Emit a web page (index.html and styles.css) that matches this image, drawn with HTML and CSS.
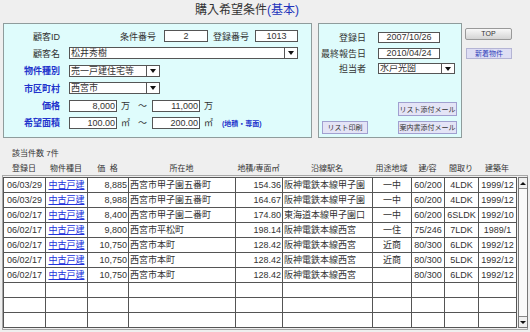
FILE: index.html
```html
<!DOCTYPE html>
<html lang="ja">
<head>
  <meta charset="UTF-8">
  <title>購入希望条件</title>
  <link rel="stylesheet" href="styles.css">
</head>
<body>
  <h1 class="title">購入希望条件<span class="title-sub">(基本)</span></h1>

  <div class="top">
    <div class="panel panel-main">
      <div class="row">
        <span class="lbl">顧客ID</span>
        <span class="lbl lbl-no1">条件番号</span>
        <span class="box box-no1">2</span>
        <span class="lbl lbl-no2">登録番号</span>
        <span class="box box-no2">1013</span>
      </div>
      <div class="row">
        <span class="lbl">顧客名</span>
        <span class="box select select-name"><span class="select-text">松井秀樹</span><span class="arrow"></span></span>
      </div>
      <div class="row">
        <span class="lbl lbl-key">物件種別</span>
        <span class="box select select-short"><span class="select-text">売一戸建住宅等</span><span class="arrow"></span></span>
      </div>
      <div class="row">
        <span class="lbl lbl-key">市区町村</span>
        <span class="box select select-short"><span class="select-text">西宮市</span><span class="arrow"></span></span>
      </div>
      <div class="row">
        <span class="lbl lbl-key">価格</span>
        <span class="box box-range">8,000</span>
        <span class="unit">万</span>
        <span class="tilde">～</span>
        <span class="box box-range">11,000</span>
        <span class="unit">万</span>
      </div>
      <div class="row">
        <span class="lbl lbl-key">希望面積</span>
        <span class="box box-range">100.00</span>
        <span class="unit">㎡</span>
        <span class="tilde">～</span>
        <span class="box box-range">200.00</span>
        <span class="unit">㎡</span>
        <span class="note">(地積・専面)</span>
      </div>
    </div>

    <div class="panel panel-side">
      <div class="side-row">
        <span class="side-lbl">登録日</span>
        <span class="box box-date">2007/10/26</span>
      </div>
      <div class="side-row">
        <span class="side-lbl">最終報告日</span>
        <span class="box box-date">2010/04/24</span>
      </div>
      <div class="side-row">
        <span class="side-lbl">担当者</span>
        <span class="box select select-staff"><span class="select-text">水戸光圀</span><span class="arrow"></span></span>
      </div>
      <div class="side-actions">
        <div class="btn-row">
          <button class="btn btn-mail">リスト添付メール</button>
        </div>
        <div class="btn-row">
          <button class="btn btn-print">リスト印刷</button>
          <button class="btn btn-guide">案内書添付メール</button>
        </div>
      </div>
    </div>

    <div class="nav">
      <button class="btn-top">TOP</button>
      <button class="btn-new">新着物件</button>
    </div>
  </div>

  <div class="count">該当件数 7件</div>

  <table class="head">
    <colgroup>
      <col style="width:42px"><col style="width:42px"><col style="width:41px"><col style="width:107px"><col style="width:47px">
      <col style="width:90px"><col style="width:39px"><col style="width:33px"><col style="width:34px"><col style="width:38px">
    </colgroup>
    <tr>
      <th>登録日</th><th>物件種目</th><th>価&nbsp;&nbsp;格</th><th>所在地</th><th>地積/専面㎡</th>
      <th>沿線駅名</th><th>用途地域</th><th>建/容</th><th>間取り</th><th>建築年</th>
    </tr>
  </table>

  <div class="list">
    <table class="grid">
      <colgroup>
        <col style="width:42px"><col style="width:42px"><col style="width:41px"><col style="width:107px"><col style="width:47px">
        <col style="width:90px"><col style="width:39px"><col style="width:33px"><col style="width:34px"><col style="width:38px">
      </colgroup>
      <tr><td class="c">06/03/29</td><td class="c"><a href="#">中古戸建</a></td><td class="r">8,885</td><td>西宮市甲子園五番町</td><td class="r">154.36</td><td>阪神電鉄本線甲子園</td><td class="c">一中</td><td class="c">60/200</td><td class="c">4LDK</td><td class="c">1999/12</td></tr>
      <tr><td class="c">06/03/29</td><td class="c"><a href="#">中古戸建</a></td><td class="r">8,988</td><td>西宮市甲子園五番町</td><td class="r">164.67</td><td>阪神電鉄本線甲子園</td><td class="c">一中</td><td class="c">60/200</td><td class="c">4LDK</td><td class="c">1999/12</td></tr>
      <tr><td class="c">06/02/17</td><td class="c"><a href="#">中古戸建</a></td><td class="r">8,400</td><td>西宮市甲子園二番町</td><td class="r">174.80</td><td>東海道本線甲子園口</td><td class="c">一中</td><td class="c">60/200</td><td class="c">6SLDK</td><td class="c">1992/10</td></tr>
      <tr><td class="c">06/02/17</td><td class="c"><a href="#">中古戸建</a></td><td class="r">9,800</td><td>西宮市平松町</td><td class="r">198.14</td><td>阪神電鉄本線西宮</td><td class="c">一住</td><td class="c">75/246</td><td class="c">7LDK</td><td class="c">1989/1</td></tr>
      <tr><td class="c">06/02/17</td><td class="c"><a href="#">中古戸建</a></td><td class="r">10,750</td><td>西宮市本町</td><td class="r">128.42</td><td>阪神電鉄本線西宮</td><td class="c">近商</td><td class="c">80/300</td><td class="c">6LDK</td><td class="c">1992/12</td></tr>
      <tr><td class="c">06/02/17</td><td class="c"><a href="#">中古戸建</a></td><td class="r">10,750</td><td>西宮市本町</td><td class="r">128.42</td><td>阪神電鉄本線西宮</td><td class="c">近商</td><td class="c">80/300</td><td class="c">5LDK</td><td class="c">1992/12</td></tr>
      <tr><td class="c">06/02/17</td><td class="c"><a href="#">中古戸建</a></td><td class="r">10,750</td><td>西宮市本町</td><td class="r">128.42</td><td>阪神電鉄本線西宮</td><td class="c"></td><td class="c">80/300</td><td class="c">6LDK</td><td class="c">1992/12</td></tr>
      <tr><td></td><td></td><td></td><td></td><td></td><td></td><td></td><td></td><td></td><td></td></tr>
      <tr><td></td><td></td><td></td><td></td><td></td><td></td><td></td><td></td><td></td><td></td></tr>
      <tr><td></td><td></td><td></td><td></td><td></td><td></td><td></td><td></td><td></td><td></td></tr>
    </table>
    <div class="scroll">
      <span class="scroll-btn scroll-up"></span>
      <span class="scroll-track"></span>
      <span class="scroll-btn scroll-down"></span>
    </div>
  </div>
</body>
</html>
```

FILE: styles.css
```css
html, body {
  margin: 0;
  padding: 0;
}
body {
  width: 530px;
  height: 332px;
  overflow: hidden;
  background: #efefef;
  color: #333;
  font-family: "Liberation Sans", "Noto Sans CJK JP", sans-serif;
  font-size: 9px;
}
.title {
  margin: 0;
  height: 23px;
  padding-right: 36px;
  line-height: 21px;
  text-align: center;
  font-size: 12px;
  font-weight: normal;
  color: #333;
}
.title-sub {
  color: #2233bb;
}

/* upper panels */
.top {
  display: flex;
  height: 115px;
  padding-left: 3px;
}
.panel {
  box-sizing: border-box;
  height: 115px;
  background: #dffcfc;
  border: 1px solid #8f9c9c;
}
.panel-main {
  width: 309px;
  padding-top: 6px;
  display: flex;
  flex-direction: column;
  gap: 5.4px;
}
.row {
  display: flex;
  align-items: center;
  height: 12px;
}
.lbl {
  flex: none;
  width: 56px;
  text-align: right;
  white-space: nowrap;
}
.lbl-key {
  color: #2233cc;
  font-weight: bold;
}
.lbl-no1 {
  width: 96px;
  padding-right: 8px;
}
.lbl-no2 {
  width: 41px;
  padding-right: 6px;
}
.box {
  flex: none;
  box-sizing: border-box;
  height: 12px;
  background: #fff;
  border: 1px solid #555;
  padding: 0 2px;
  line-height: 10px;
  white-space: nowrap;
  overflow: hidden;
}
.box-no1 {
  width: 44px;
  text-align: center;
}
.box-no2 {
  width: 43px;
  text-align: center;
}
.select {
  display: flex;
  padding: 0 0 0 1px;
  margin-left: 9px;
}
.select-text {
  flex: 1;
  overflow: hidden;
}
.arrow {
  flex: none;
  width: 12px;
  border-left: 1px solid #555;
  display: flex;
  align-items: center;
  justify-content: center;
}
.arrow::after {
  content: "";
  border-left: 3px solid transparent;
  border-right: 3px solid transparent;
  border-top: 4px solid #111;
}
.select-name {
  width: 229px;
}
.select-short {
  width: 91px;
}
.box-range {
  width: 48px;
  text-align: right;
  padding-right: 1px;
}
.row .lbl + .box-range {
  margin-left: 9px;
}
.unit {
  margin-left: 4px;
  width: 10px;
}
.tilde {
  margin-left: 7px;
  width: 10px;
  margin-right: 4px;
}
.note {
  margin-left: 8px;
  color: #2233cc;
  font-size: 7px;
  font-weight: bold;
}

.panel-side {
  width: 144px;
  margin-left: 6px;
  padding: 8px 0 3px 0;
  display: flex;
  flex-direction: column;
  gap: 4.5px;
}
.side-row {
  display: flex;
  align-items: center;
  height: 11px;
}
.side-row .box {
  height: 11px;
  line-height: 9px;
}
.side-lbl {
  width: 47px;
  margin-right: 12px;
  text-align: right;
  white-space: nowrap;
}
.box-date {
  width: 62px;
  text-align: center;
}
.select-staff {
  width: 77px;
  margin-left: 0;
}
.side-actions {
  margin-top: auto;
  display: flex;
  flex-direction: column;
  gap: 5px;
}
.btn-row {
  display: flex;
}
.btn {
  box-sizing: border-box;
  height: 13px;
  padding: 0;
  background: #e4e4f6;
  border: 1px solid #a0a0d0;
  color: #333;
  font-family: inherit;
  font-size: 7px;
  line-height: 11px;
}
.btn-mail {
  margin-left: 79px;
  width: 59px;
  height: 14px;
}
.btn-print {
  margin-left: 3px;
  width: 46px;
}
.btn-guide {
  margin-left: 30px;
  width: 59px;
}

.nav {
  display: flex;
  flex-direction: column;
  margin-left: 3px;
  padding-top: 5px;
  gap: 8px;
}
.btn-top {
  box-sizing: border-box;
  width: 47px;
  height: 12px;
  padding: 0;
  border: 1px solid #999;
  border-radius: 2px;
  background: linear-gradient(#f8f8f8, #d4d4d4);
  color: #333;
  font-family: inherit;
  font-size: 7px;
  line-height: 10px;
}
.btn-new {
  box-sizing: border-box;
  width: 46px;
  height: 11px;
  margin-left: 1px;
  padding: 0;
  border: 1px solid #b4b4d4;
  background: #dedef4;
  color: #3344bb;
  font-family: inherit;
  font-size: 7px;
  line-height: 9px;
}

/* result list */
.count {
  margin-top: 11px;
  height: 10px;
  line-height: 10px;
  padding-left: 12px;
  font-size: 8px;
}
.head {
  margin: 2px 0 0 3px;
  width: 513px;
  table-layout: fixed;
  border-collapse: collapse;
}
.head th {
  height: 12px;
  padding: 0;
  font-size: 8px;
  font-weight: normal;
  text-align: center;
  white-space: nowrap;
}
.list {
  box-sizing: border-box;
  display: flex;
  margin: 2px 0 0 2px;
  width: 526px;
  height: 155px;
  border: 1px solid #a8a8a8;
  padding-top: 1px;
}
.grid {
  flex: none;
  width: 513px;
  table-layout: fixed;
  border-collapse: collapse;
  align-self: flex-start;
  background: #fff;
}
.grid td {
  height: 14px;
  padding: 0 1px;
  border: 1px solid #555;
  line-height: 12px;
  white-space: nowrap;
  overflow: hidden;
}
.grid td.c {
  text-align: center;
}
.grid td.r {
  text-align: right;
}
.grid a {
  color: #2233dd;
  text-decoration: underline;
}
.scroll {
  box-sizing: border-box;
  flex: none;
  width: 10px;
  height: 151px;
  margin-left: 1px;
  border: 1px solid #777;
  background: #fafafa;
  display: flex;
  flex-direction: column;
}
.scroll-btn {
  height: 10px;
  display: flex;
  align-items: center;
  justify-content: center;
  background: #f0f0f0;
}
.scroll-up {
  border-bottom: 1px solid #888;
}
.scroll-up::after {
  content: "";
  border-left: 3px solid transparent;
  border-right: 3px solid transparent;
  border-bottom: 3px solid #111;
}
.scroll-down {
  border-top: 1px solid #888;
}
.scroll-down::after {
  content: "";
  border-left: 3px solid transparent;
  border-right: 3px solid transparent;
  border-top: 3px solid #111;
}
.scroll-track {
  flex: 1;
}
```
